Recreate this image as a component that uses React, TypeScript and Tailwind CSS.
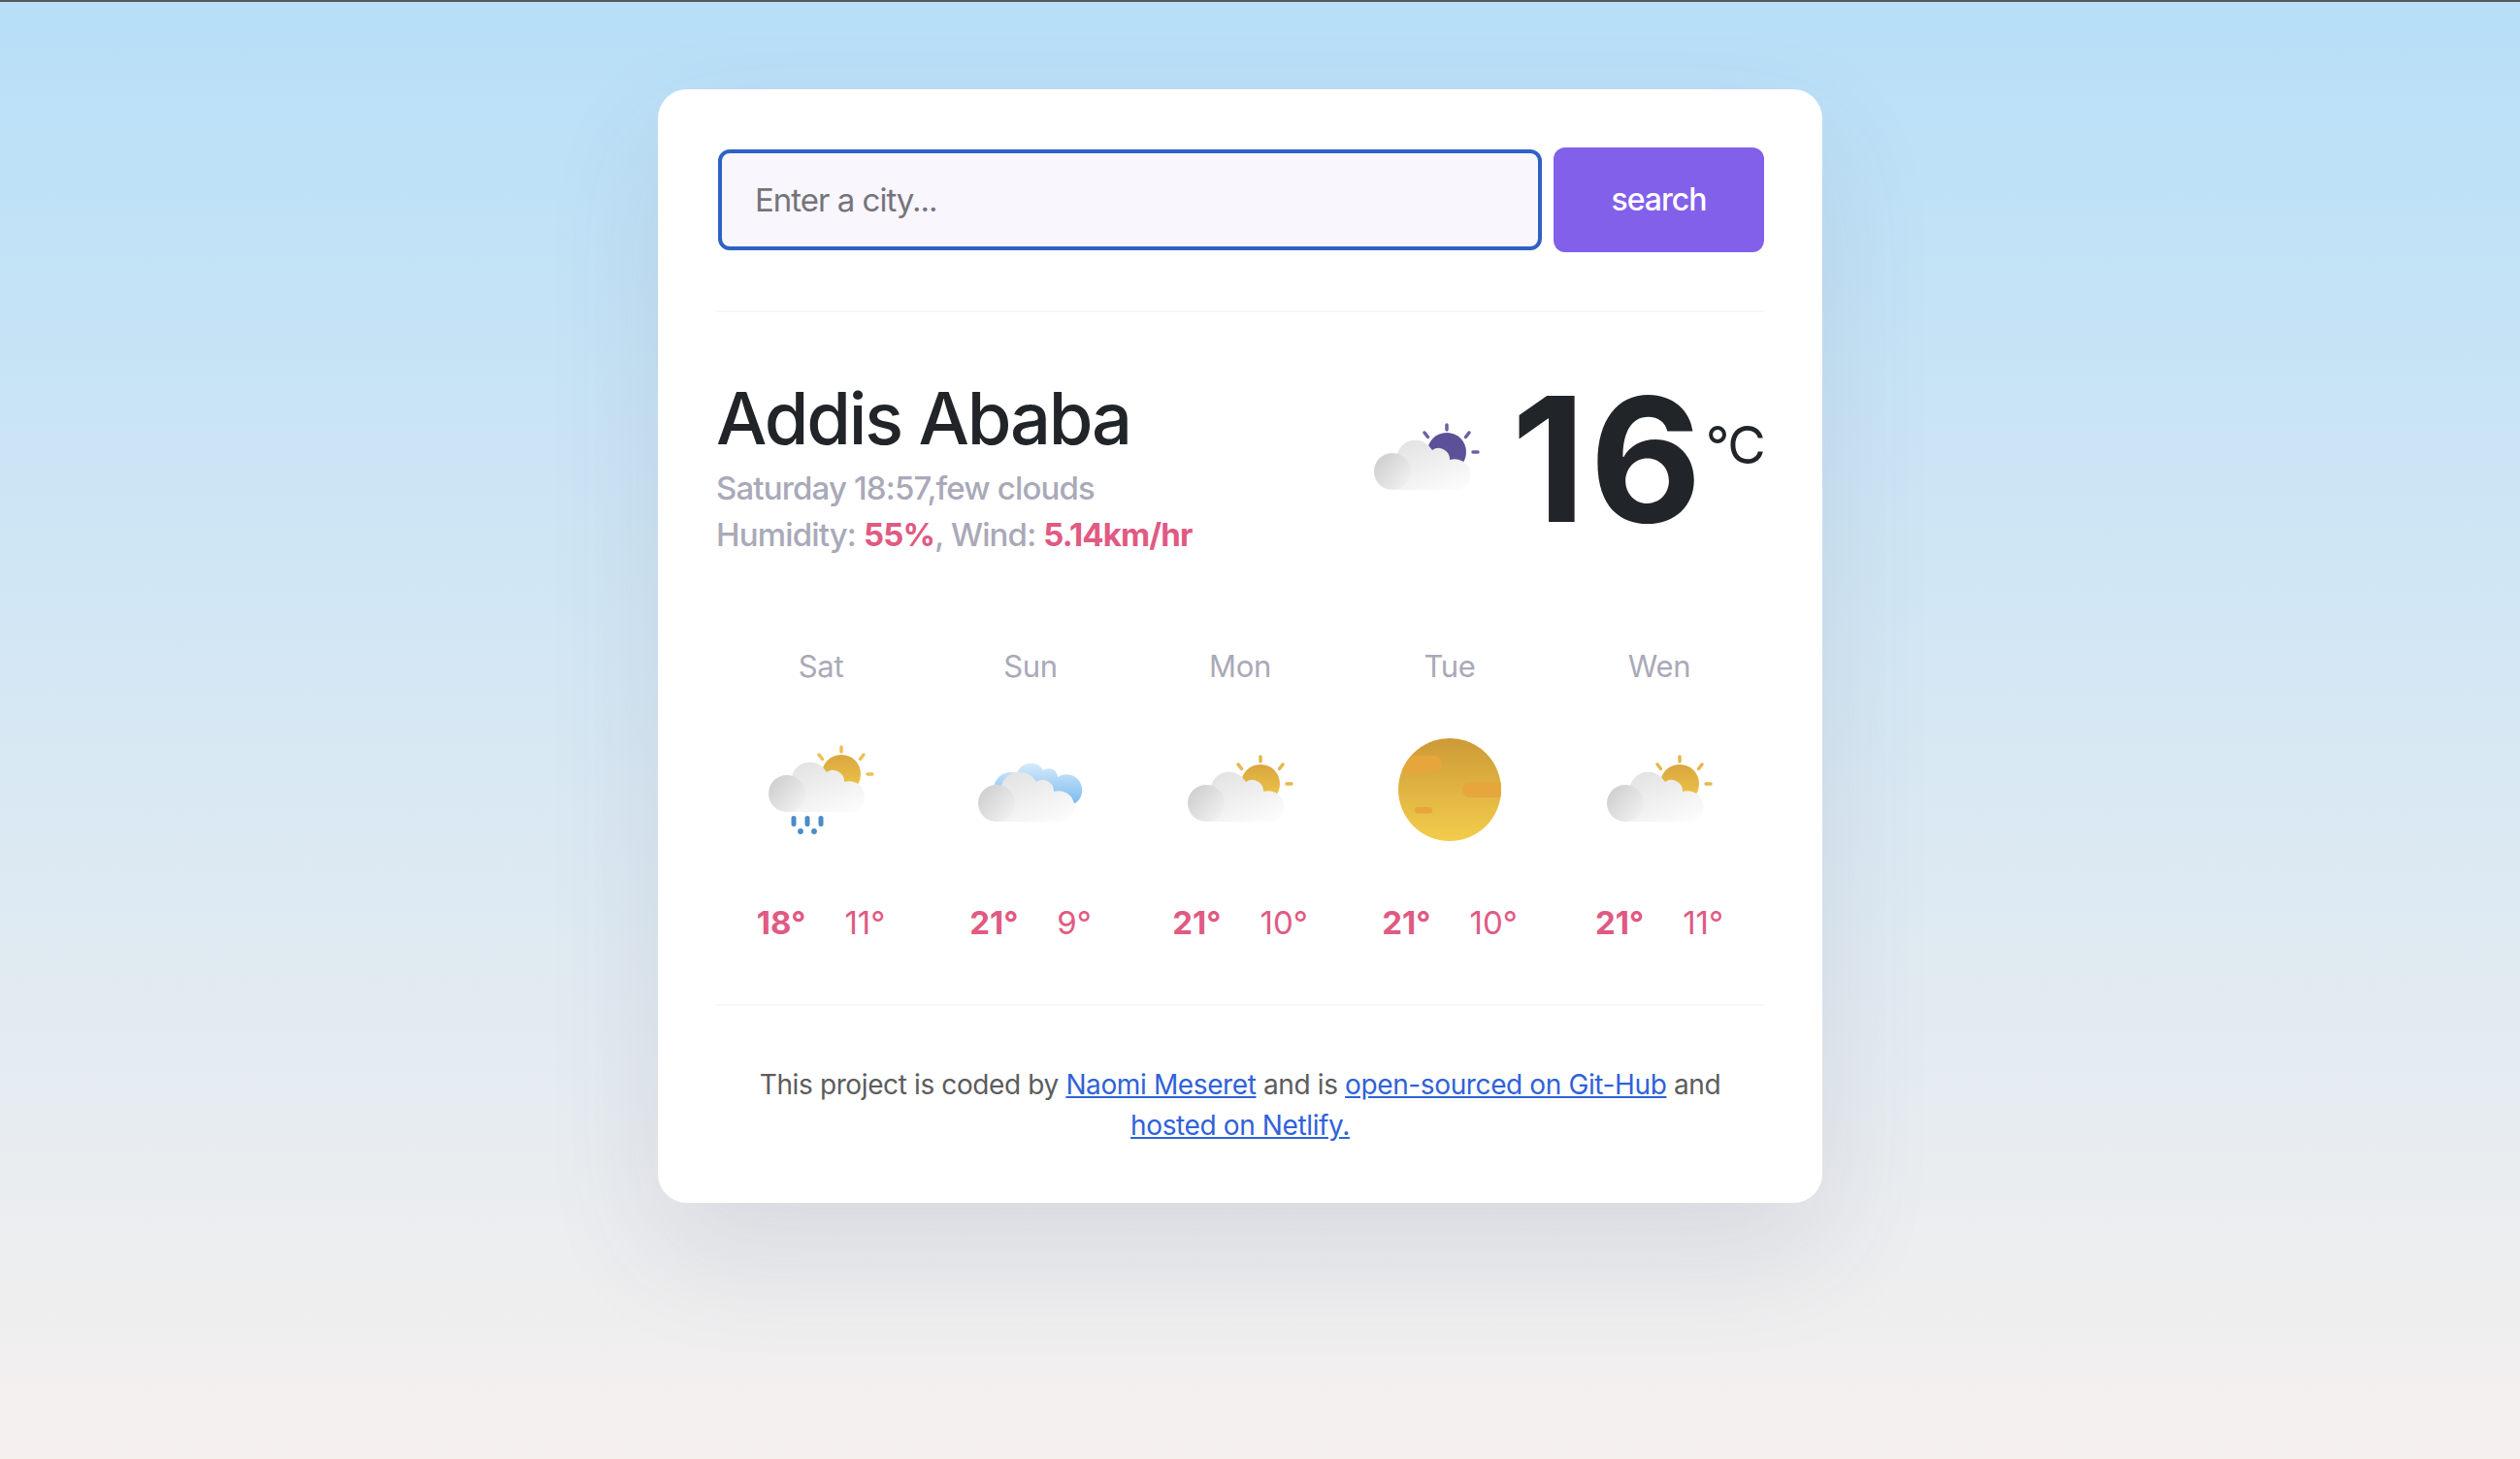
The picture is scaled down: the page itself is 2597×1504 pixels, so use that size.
import React from "react";

type Kind = "rain" | "clouds" | "sun" | "night" | "moon";

function Cloud({ id }: { id: string }) {
  return (
    <g>
      <defs>
        <linearGradient id={`${id}c`} x1="0.1" y1="0" x2="0.85" y2="1">
          <stop offset="0" stopColor="#e0e0e0" />
          <stop offset="0.5" stopColor="#eeeeee" />
          <stop offset="1" stopColor="#fcfcfc" />
        </linearGradient>
        <linearGradient id={`${id}s`} x1="0.05" y1="0.1" x2="1" y2="0.9">
          <stop offset="0" stopColor="#cdcdcd" />
          <stop offset="1" stopColor="#f3f3f3" />
        </linearGradient>
      </defs>
      <path
        fill={`url(#${id}c)`}
        d="M25 93 A19 19 0 0 1 30 56 A19.5 19.5 0 0 1 66 52 A11.5 11.5 0 0 1 84 62 A16 16 0 0 1 94 93 Z"
      />
      <circle cx="25" cy="74" r="19" fill={`url(#${id}s)`} />
    </g>
  );
}

function Sun({ id, top, bottom, ray }: { id: string; top: string; bottom: string; ray: string }) {
  return (
    <g>
      <defs>
        <linearGradient id={`${id}g`} x1="0" y1="0" x2="0" y2="1">
          <stop offset="0" stopColor={top} />
          <stop offset="1" stopColor={bottom} />
        </linearGradient>
      </defs>
      <circle cx="81" cy="54" r="20" fill={`url(#${id}g)`} />
      <g stroke={ray} strokeWidth="3.500" strokeLinecap="round">
        <path d="M81 26 V31" />
        <path d="M104 34 L100.500 38.500" />
        <path d="M58 34 L61.500 38.500" />
        <path d="M108 54 H113" />
      </g>
    </g>
  );
}

function WeatherIcon({ kind, id }: { kind: Kind; id: string }) {
  if (kind === "moon") {
    return (
      <svg width="120" height="120" viewBox="0 0 120 120">
        <defs>
          <linearGradient id={`${id}m`} x1="0" y1="0" x2="0" y2="1">
            <stop offset="0" stopColor="#cd9a37" />
            <stop offset="1" stopColor="#f3cd4c" />
          </linearGradient>
          <clipPath id={`${id}p`}>
            <circle cx="60" cy="60" r="53" />
          </clipPath>
        </defs>
        <circle cx="60" cy="60" r="53" fill={`url(#${id}m)`} />
        <g clipPath={`url(#${id}p)`} fill="#e6a63c">
          <rect x="6" y="25" width="46" height="17" rx="8.500" />
          <rect x="73" y="52" width="46" height="16" rx="8" />
          <rect x="24" y="78" width="18" height="6.500" rx="3.250" />
        </g>
      </svg>
    );
  }
  return (
    <svg width="120" height="120" viewBox="0 0 120 120">
      <g transform={kind === "rain" ? "translate(0 -10)" : undefined}>
        {kind === "clouds" && (
          <g>
            <defs>
              <linearGradient id={`${id}b`} x1="0" y1="0" x2="0" y2="1">
                <stop offset="0" stopColor="#d6eafa" />
                <stop offset="1" stopColor="#6fb4ee" />
              </linearGradient>
            </defs>
            <path
              fill={`url(#${id}b)`}
              d="M22 62 A18 18 0 0 1 46 43 A15 15 0 0 1 73 40 A9.500 9.500 0 0 1 88 47 A13.500 13.500 0 0 1 106 74 L60 80 Z"
            />
          </g>
        )}
        {kind === "rain" && <Sun id={id} top="#d9a63f" bottom="#f0c94b" ray="#efbf58" />}
        {kind === "sun" && <Sun id={id} top="#d9a63f" bottom="#f0c94b" ray="#e4b84a" />}
        {kind === "night" && <Sun id={id} top="#5c4f97" bottom="#5c5499" ray="#6a61a5" />}
        <Cloud id={id} />
      </g>
      {kind === "rain" && (
        <g fill="#4a8bc8">
          <rect x="29.500" y="87" width="5" height="11" rx="2.500" />
          <rect x="43.500" y="87" width="5" height="11" rx="2.500" />
          <rect x="57.500" y="87" width="5" height="11" rx="2.500" />
          <circle cx="39" cy="103" r="2.900" />
          <circle cx="53" cy="103" r="2.900" />
        </g>
      )}
    </svg>
  );
}

const days: { name: string; kind: Kind; hi: string; lo: string }[] = [
  { name: "Sat", kind: "rain", hi: "18°", lo: "11°" },
  { name: "Sun", kind: "clouds", hi: "21°", lo: "9°" },
  { name: "Mon", kind: "sun", hi: "21°", lo: "10°" },
  { name: "Tue", kind: "moon", hi: "21°", lo: "10°" },
  { name: "Wen", kind: "sun", hi: "21°", lo: "11°" },
];

export default function App() {
  return (
    <div className="h-[1504px] overflow-hidden border-t-2 border-[#55595c] bg-gradient-to-b from-[#b7dff8] to-[#f5f0ee] pt-[90px] [font-family:Inter,sans-serif]">
      <div className="ml-[678px] h-[1148px] w-[1200px] rounded-[30px] bg-white px-[60px] pt-[60px] shadow-[0_50px_120px_rgba(70,70,110,0.12)]">
        <form className="flex items-center justify-between border-b-2 border-[#f8f8f8] pb-[60px]">
          <input
            placeholder="Enter a city..."
            className="ml-[2px] h-[104px] w-[849px] rounded-[12px] border-4 border-[#2f62c4] bg-[#f9f6fe] pl-[34px] text-[33px] tracking-[-1px] outline-none placeholder:text-[#74747a]"
          />
          <button
            type="button"
            className="h-[108px] w-[217px] rounded-[12px] bg-[#8360e9] text-[32px] font-medium tracking-[-1px] text-white"
          >
            search
          </button>
        </form>

        <div className="mt-[62px] flex justify-between">
          <div>
            <h1 className="text-[74px] leading-[95px] font-medium tracking-[-2.2px] text-[#212529]">Addis Ababa</h1>
            <div className="text-[33px] leading-[48px] font-medium tracking-[-0.85px] text-[#a9a9b8]">
              <div>Saturday 18:57,few clouds</div>
              <div>
                Humidity: <span className="font-bold text-[#e05a83]">55%</span>, Wind:{" "}
                <span className="font-bold text-[#e05a83]">5.14km/hr</span>
              </div>
            </div>
          </div>
          <div className="flex items-start">
            <div className="mt-[28px] mr-[27px]">
              <WeatherIcon kind="night" id="hero" />
            </div>
            <span className="mt-[1px] text-[178px] leading-[178px] font-bold tracking-[4px] text-[#212529]">16</span>
            <span className="mt-[41px] text-[54px] leading-[68px] tracking-[-1.6px] text-[#212529]">°C</span>
          </div>
        </div>

        <div className="mt-[90px] grid grid-cols-5 border-b-2 border-[#f8f8f8] pb-[62px]">
          {days.map((d, i) => (
            <div key={d.name} className="flex flex-col items-center">
              <div className="text-[31px] leading-[44px] tracking-[-0.3px] text-[#a9a9b8]">{d.name}</div>
              <div className="mt-[45px]">
                <WeatherIcon kind={d.kind} id={`d${i}`} />
              </div>
              <div className="mt-[55px] flex gap-[40px] text-[33px] leading-[44px] text-[#e05a83]">
                <span className="font-bold">{d.hi}</span>
                <span>{d.lo}</span>
              </div>
            </div>
          ))}
        </div>

        <p className="mx-auto mt-[60px] w-[1040px] text-center text-[28px] leading-[42px] tracking-[-0.38px] text-[#5c5c5c]">
          This project is coded by{" "}
          <a href="#" className="text-[#2f62d9] underline">
            Naomi Meseret
          </a>{" "}
          and is{" "}
          <a href="#" className="text-[#2f62d9] underline">
            open-sourced on Git-Hub
          </a>{" "}
          and{" "}
          <a href="#" className="text-[#2f62d9] underline">
            hosted on Netlify.
          </a>
        </p>
      </div>
    </div>
  );
}
